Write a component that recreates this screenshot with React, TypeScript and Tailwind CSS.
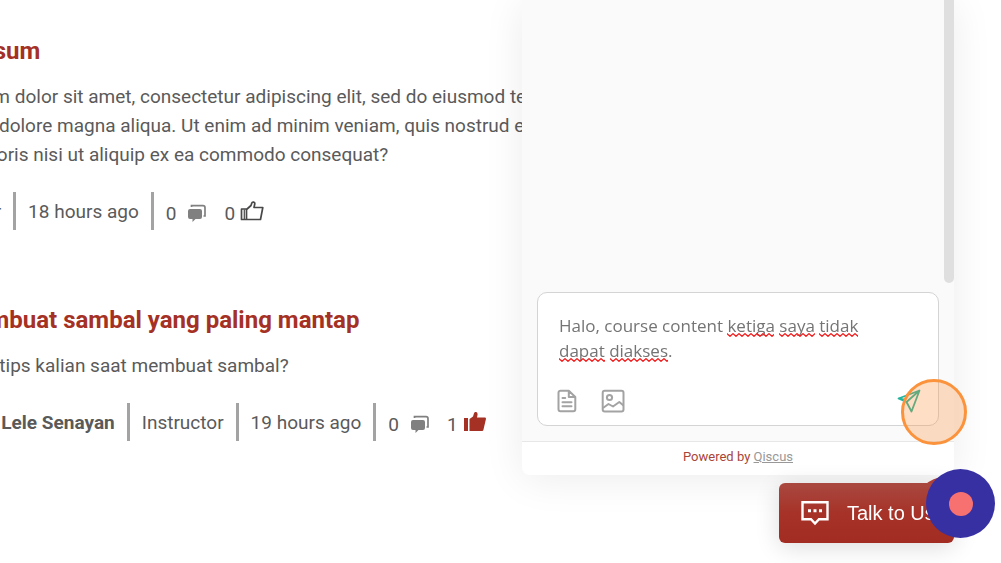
import type { ReactNode } from "react";

function CommentsIcon() {
  return (
    <svg viewBox="0 0 18 18" className="h-[18px] w-[18px] text-[#808080]" fill="currentColor" aria-hidden="true">
      <path d="M2 5h10a2 2 0 0 1 2 2v6a2 2 0 0 1-2 2H7.500l-3 3v-3H2a2 2 0 0 1-2-2V7a2 2 0 0 1 2-2Z" />
      <path d="M3.500 3V1.700H15a2 2 0 0 1 2 2V12h-1.500" fill="none" stroke="currentColor" strokeWidth="1.700" />
    </svg>
  );
}

function ThumbIcon({ liked }: { liked?: boolean }) {
  return liked ? (
    <svg viewBox="0 0 24 20" className="h-5 w-6 text-[#a53125]" fill="currentColor" aria-hidden="true">
      <path d="M1 6h4v13H1zM6.500 7 10 4.500l1-3.200c.3-1.200 1.200-1.500 2-1.300 1.300.3 1.800 1.600 1.500 3L14 5.500h7.500c1.200 0 1.700.8 1.400 1.800l-2.400 10.200c-.3 1-.8 1.500-1.800 1.500H6.500Z" />
    </svg>
  ) : (
    <svg viewBox="0 0 24 20" className="h-5 w-6 text-[#484848]" fill="none" stroke="currentColor" strokeWidth="1.700" strokeLinejoin="round" aria-hidden="true">
      <path d="M1.500 8h5v10.500h-5zM6.500 8.500l4.500-4 .8-2.500c.5-1.500 3.200-1.200 3 .8L14 6.500h8.800l-2.300 12h-14" />
      <path d="M4.300 8.500v9.500" strokeWidth="1.200" />
    </svg>
  );
}

function Meta({ items, comments, likes, liked }: { items: ReactNode[]; comments: number; likes: number; liked?: boolean }) {
  return (
    <div className="flex h-[38px] items-stretch">
      {items.map((item, i) => (
        <div key={i} className="mr-3 flex items-center border-r-[3px] border-[#a3a3a3] pr-3">
          {item}
        </div>
      ))}
      <div className="flex items-center pt-1">
        <button type="button" aria-label="Comments" className="flex items-center gap-3">
          <span>{comments}</span>
          <CommentsIcon />
        </button>
        <button type="button" aria-label="Like" className="ml-[18px] flex items-center gap-[5px]">
          <span>{likes}</span>
          <span className="pb-1"><ThumbIcon liked={liked} /></span>
        </button>
      </div>
    </div>
  );
}

function Squiggle({ className }: { className: string }) {
  return (
    <svg className={"absolute h-1 " + className} aria-hidden="true">
      <defs>
        <pattern id="wave" width="6" height="4" patternUnits="userSpaceOnUse">
          <path d="M-3 3.300 0 0.700 3 3.300 6 0.700 9 3.300" fill="none" stroke="#f01e1e" strokeWidth="1.300" />
        </pattern>
      </defs>
      <rect width="100%" height="4" fill="url(#wave)" />
    </svg>
  );
}

function ChatWidget() {
  return (
    <section aria-label="Chat" className="fixed top-0 right-[47px] bottom-[88px] flex w-[432px] flex-col overflow-hidden rounded-b-lg bg-[#fafafa] shadow-[0_4px_40px_rgba(0,0,0,0.08)]">
      <div className="flex flex-1 justify-end">
        <div className="mb-[9px] w-[10px] rounded-b-full bg-[#dfdfdf]" />
      </div>
      <form className="mr-[15px] mb-[15px] ml-[15px] rounded-[10px] border border-[#d4d4d4] bg-white px-5 pt-5 pb-[12px]">
        <div className="relative">
          <textarea
            aria-label="Message"
            rows={2}
            spellCheck={false}
            defaultValue="Halo, course content ketiga saya tidak dapat diakses."
            className="block h-[50px] w-80 resize-none overflow-hidden pl-[1px] font-['Open_Sans','Noto_Sans',sans-serif] text-[17px] leading-[25px] text-[#747474] outline-none"
          />
          <Squiggle className="top-5 left-[169px] w-[47px]" />
          <Squiggle className="top-5 left-[221px] w-[36px]" />
          <Squiggle className="top-5 left-[261px] w-[39px]" />
          <Squiggle className="top-[45px] left-[1px] w-[46px]" />
          <Squiggle className="top-[45px] left-[52px] w-[58px]" />
        </div>
        <div className="mt-[26px] flex items-center">
          <button type="button" aria-label="Attach file" className="-ml-[3px]">
            <svg viewBox="0 0 24 24" className="size-6 text-[#a3a3a3]" fill="none" stroke="currentColor" strokeWidth="2" strokeLinecap="round" strokeLinejoin="round">
              <path d="M5.500 1.700h8.300L20.300 8v12.300a2 2 0 0 1-2 2H5.500a2 2 0 0 1-2-2V3.700a2 2 0 0 1 2-2ZM13.800 1.700V8h6.500M7.500 9h2.700M7.500 13.200h9M7.500 17.200h9" />
            </svg>
          </button>
          <button type="button" aria-label="Attach image" className="ml-[22px]">
            <svg viewBox="0 0 24 24" className="size-6 text-[#a3a3a3]" fill="none" stroke="currentColor" strokeWidth="2" strokeLinejoin="round">
              <rect x="1.700" y="1.700" width="20.800" height="20.800" rx="2" />
              <circle cx="8.500" cy="8.500" r="2.600" />
              <path d="m2 19 5.500-4 4.500 2.500 6.300-4.500 4.200 3.500" />
            </svg>
          </button>
          <button type="submit" aria-label="Send" className="mr-[-3px] ml-auto">
            <svg viewBox="0 0 24 24" className="size-6 text-[#24b39b]" fill="none" stroke="currentColor" strokeWidth="1.800" strokeLinejoin="round">
              <path d="M22.500 1.500 1.500 9.500 9.500 13l5 9.500ZM22.500 1.500 9.500 13M1.500 9.500l7.500 1.500" />
            </svg>
          </button>
        </div>
      </form>
      <footer className="flex h-[34px] items-center justify-center border-t border-[#e7e7e7] bg-white pb-1 font-[Roboto,sans-serif] text-[13px] text-[#a94438]">
        <span>
          Powered by <a href="#qiscus" className="text-[#989898] underline">Qiscus</a>
        </span>
      </footer>
    </section>
  );
}

export default function App() {
  return (
    <div className="min-h-screen overflow-hidden bg-white font-[Roboto,sans-serif] text-[19px] leading-[29px] text-[#5a5a5a]">
      <main className="-ml-[101px] pt-[35px] whitespace-nowrap">
        <article>
          <h2 className="text-[24px] leading-8 font-bold text-[#a53125]">Lorem ipsum</h2>
          <p className="mt-[15px]">
            Lorem ipsum dolor sit amet, consectetur adipiscing elit, sed do eiusmod tempor incididunt
            <br />
            ut labore et dolore magna aliqua. Ut enim ad minim veniam, quis nostrud exercitation
            <br />
            ullamco laboris nisi ut aliquip ex ea commodo consequat?
          </p>
          <div className="mt-[23px] pl-[38px]">
            <Meta items={["Learner", "18 hours ago"]} comments={0} likes={0} />
          </div>
        </article>
        <article className="mt-[74px]">
          <h2 className="text-[24px] leading-8 font-bold text-[#a53125]">Cara membuat sambal yang paling mantap</h2>
          <p className="mt-[15px]">Bagaimana tips kalian saat membuat sambal?</p>
          <div className="mt-[23px] pl-[50px]">
            <Meta items={[<b>Pecel Lele Senayan</b>, "Instructor", "19 hours ago"]} comments={0} likes={1} liked />
          </div>
        </article>
      </main>

      <ChatWidget />

      <div className="fixed right-7 bottom-[29px] size-[57px] rounded-full bg-[#b8443b]" />
      <button type="button" className="fixed right-[47px] bottom-5 flex h-[60px] w-[175px] items-center gap-[18px] rounded-md bg-linear-to-b from-[#a94840] via-[#a63228] to-[#a22c22] pl-[22px] font-['Liberation_Sans',sans-serif] text-[20px] whitespace-nowrap text-white shadow-[0_4px_24px_rgba(0,0,0,0.14)]">
        <svg viewBox="0 0 28 26" className="h-[26px] w-7 shrink-0" fill="none" stroke="currentColor" strokeWidth="2.400" aria-hidden="true">
          <path d="M1.500 2.200h25v17H18l-4 4.300-4-4.300H1.500Z" />
          <path d="M7 10.800h3M12.500 10.800h3M18 10.800h3" strokeWidth="3" />
        </svg>
        Talk to Us
      </button>

      <div className="fixed right-[34px] bottom-[118px] size-[66px] rounded-full border-[3px] border-[#fb923c] bg-[#fb923c]/30" />
      <button type="button" aria-label="Record" className="fixed right-[6px] bottom-[25px] flex size-[69px] items-center justify-center rounded-full bg-[#3730a3]">
        <span className="size-6 rounded-full bg-[#f87171]" />
      </button>
    </div>
  );
}
